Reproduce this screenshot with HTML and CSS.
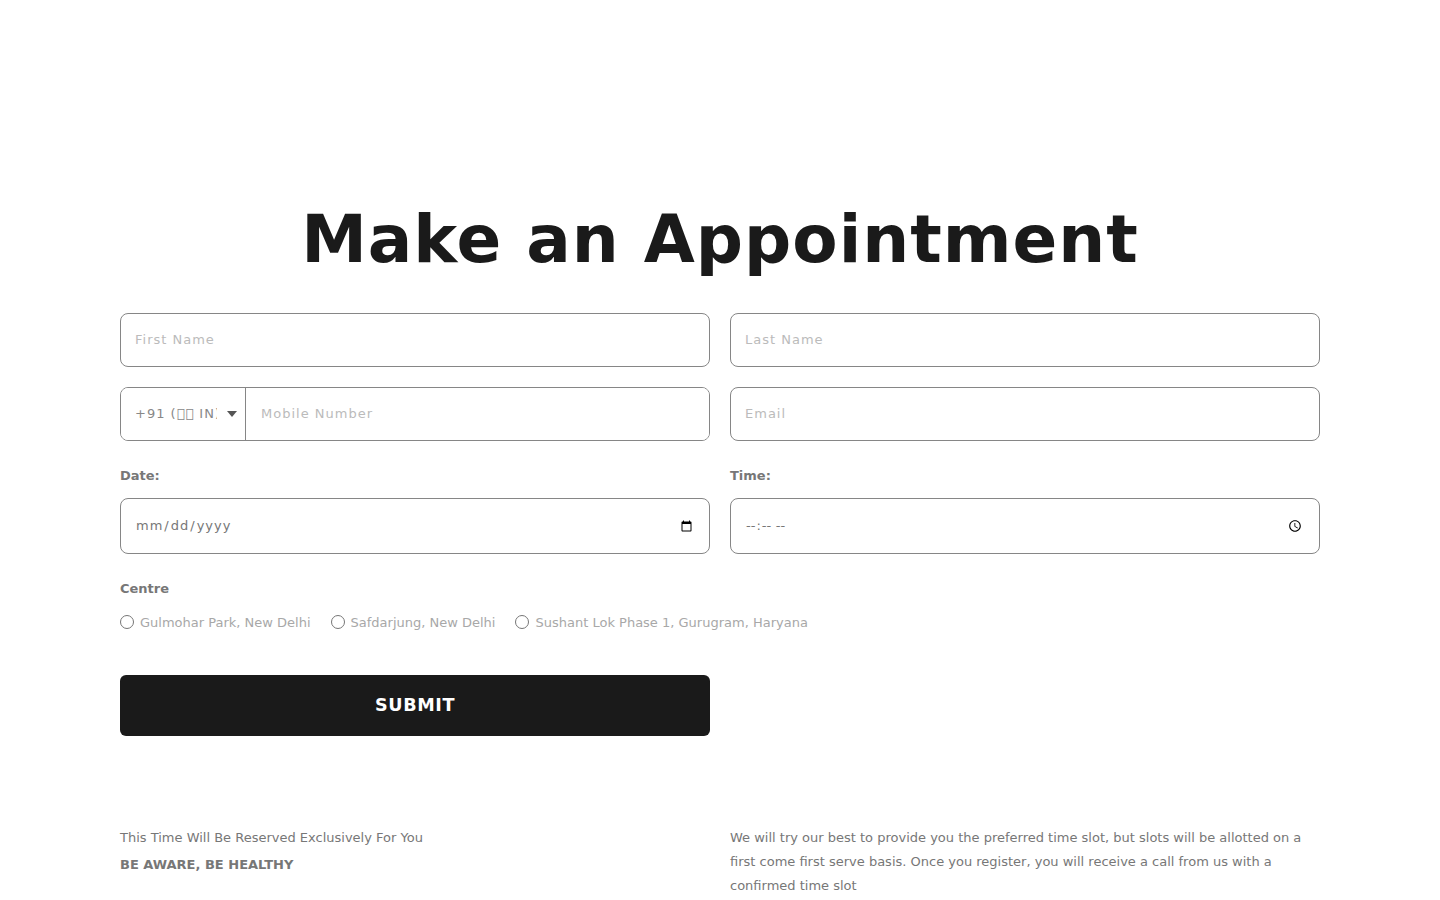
FILE: index.html
```html
<!DOCTYPE html>
<html lang="en">
<head>
<meta charset="utf-8">
<title>Make an Appointment</title>
<link rel="stylesheet" href="styles.css">
</head>
<body>
<main class="page">
  <h1 class="title">Make an Appointment</h1>
  <form class="form">
    <div class="grid">
      <input class="field" type="text" placeholder="First Name">
      <input class="field" type="text" placeholder="Last Name">
      <div class="phone">
        <div class="code-wrap">
          <select class="code"><option>+91 (&#xE100;&#xE100; IN) India</option></select>
          <span class="caret"></span>
        </div>
        <input class="number" type="tel" placeholder="Mobile Number">
      </div>
      <input class="field" type="email" placeholder="Email">
    </div>
    <div class="grid when">
      <div class="stack">
        <label class="label">Date:</label>
        <input class="field tall date" type="date">
      </div>
      <div class="stack">
        <label class="label">Time:</label>
        <input class="field tall" type="time">
      </div>
    </div>
    <p class="label centre">Centre</p>
    <div class="radios">
      <label class="radio"><input type="radio" name="centre">Gulmohar Park, New Delhi</label>
      <label class="radio"><input type="radio" name="centre">Safdarjung, New Delhi</label>
      <label class="radio"><input type="radio" name="centre">Sushant Lok Phase 1, Gurugram, Haryana</label>
    </div>
    <div class="grid">
      <button class="submit" type="button">SUBMIT</button>
    </div>
  </form>
  <section class="grid notes">
    <div>
      <p class="note">This Time Will Be Reserved Exclusively For You</p>
      <p class="note strong">BE AWARE, BE HEALTHY</p>
    </div>
    <p class="note">We will try our best to provide you the preferred time slot, but slots will be allotted on a first come first serve basis. Once you register, you will receive a call from us with a confirmed time slot</p>
  </section>
</main>
</body>
</html>
```
FILE: styles.css
```css
* { box-sizing: border-box; }
html, body { margin: 0; background: #fff; }
body { font-family: "DejaVu Sans", sans-serif; color: #777; height: 900px; overflow: hidden; }
.page { width: 1200px; margin: 0 auto; padding-top: 199px; }
.title { margin: 0 0 32px; font-size: 66px; line-height: 82px; font-weight: 700; letter-spacing: 1px; color: #1a1a1a; text-align: center; }
.grid { display: grid; grid-template-columns: 590px 590px; column-gap: 20px; row-gap: 20px; }
.field, .phone { height: 54px; width: 100%; border: 1px solid #868686; border-radius: 8px; background: #fff; }
.field { padding: 0 14px 2px; font: 13px "DejaVu Sans", sans-serif; letter-spacing: 1px; color: #777; outline: none; }
.field::placeholder, .number::placeholder { color: #bbb; opacity: 1; }
.phone { display: flex; overflow: hidden; }
.code-wrap { position: relative; width: 125px; flex: none; border-right: 1px solid #868686; }
.code { appearance: none; display: block; width: 100%; height: 100%; border: 0; background: #fff; padding: 0 28px 2px 14px; font: 13px "DejaVu Sans", sans-serif; letter-spacing: 1px; color: #888; outline: none; }
.caret { position: absolute; left: 106px; top: 23px; width: 0; height: 0; border-left: 5px solid transparent; border-right: 5px solid transparent; border-top: 6px solid #555; }
.number { flex: 1; min-width: 0; border: 0; padding: 0 15px 2px; font: 13px "DejaVu Sans", sans-serif; letter-spacing: 1px; outline: none; }
.when { margin-top: 27px; }
.stack { display: flex; flex-direction: column; }
.label { display: block; font-size: 13px; line-height: 16px; font-weight: 700; color: #777; margin: 0 0 14px; }
.tall { height: 56px; padding-bottom: 0; }
.date::-webkit-datetime-edit { padding-bottom: 2px; }
.centre { margin: 27px 0 15px; }
.radios { display: flex; gap: 20px; height: 20px; margin-bottom: 43px; }
.radio { display: flex; align-items: center; font-size: 13px; color: #a8a8a8; }
.radio input { width: 14px; height: 14px; margin: 0 6px 0 0; flex: none; }
.submit { height: 61px; border: 0; border-radius: 6px; padding-bottom: 2px; background: #1a1a1a; color: #fff; font: 700 17.6px "DejaVu Sans", sans-serif; letter-spacing: 0.6px; }
.notes { margin-top: 90px; }
.note { margin: 0; font-size: 13px; line-height: 24px; color: #777; }
.strong { margin-top: 3px; font-weight: 700; }
```
